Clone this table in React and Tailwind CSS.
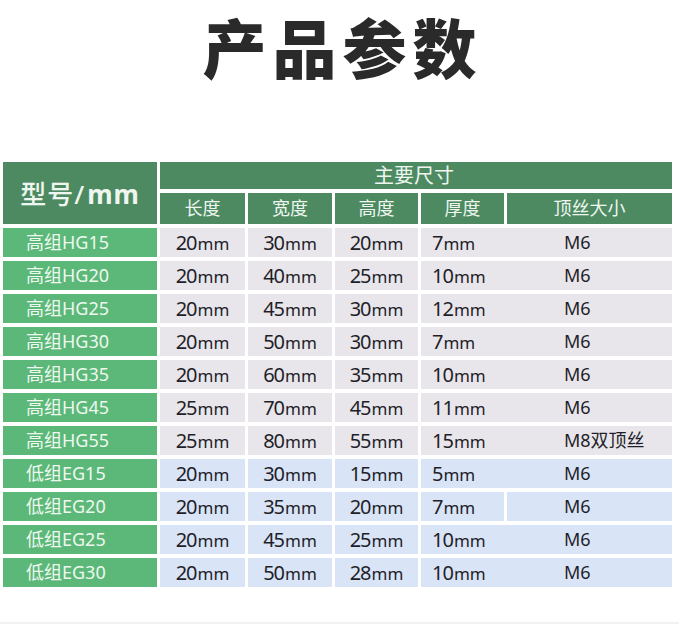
import React from 'react';

const rows = [
  { name: '高组HG15', l: '20', w: '30', h: '20', t: '7', s: 'M6', kind: 'hg' },
  { name: '高组HG20', l: '20', w: '40', h: '25', t: '10', s: 'M6', kind: 'hg' },
  { name: '高组HG25', l: '20', w: '45', h: '30', t: '12', s: 'M6', kind: 'hg' },
  { name: '高组HG30', l: '20', w: '50', h: '30', t: '7', s: 'M6', kind: 'hg' },
  { name: '高组HG35', l: '20', w: '60', h: '35', t: '10', s: 'M6', kind: 'hg' },
  { name: '高组HG45', l: '25', w: '70', h: '45', t: '11', s: 'M6', kind: 'hg' },
  { name: '高组HG55', l: '25', w: '80', h: '55', t: '15', s: 'M8双顶丝', kind: 'hg' },
  { name: '低组EG15', l: '20', w: '30', h: '15', t: '5', s: 'M6', kind: 'eg' },
  { name: '低组EG20', l: '20', w: '35', h: '20', t: '7', s: 'M6', kind: 'eg', split: true },
  { name: '低组EG25', l: '20', w: '45', h: '25', t: '10', s: 'M6', kind: 'eg' },
  { name: '低组EG30', l: '20', w: '50', h: '28', t: '10', s: 'M6', kind: 'eg' },
];

const Mm = ({ v }) => (
  <span>
    <span className="text-[20px] tracking-[-1px]">{v}</span>
    <span className="text-[17px] ml-[1px]">mm</span>
  </span>
);

const App = () => {
  return (
    <div
      className="w-[679px] h-[624px] bg-white overflow-hidden border-b-2 border-[#f1f1f1]"
      style={{ fontFamily: '"Noto Sans", "Noto Sans CJK SC", sans-serif' }}
    >
      <div className="h-[162px] pt-[12px] flex justify-center">
        <h1 className="text-[64px] leading-[74px] font-black tracking-[6px] text-[#2a2a2a] pl-[6px]">产品参数</h1>
      </div>

      <div className="ml-[3px] grid grid-cols-[154px_85px_84px_83px_83px_165px] grid-rows-[27px_31px_repeat(11,29px)] gap-x-[3px] gap-y-[4px]">
        <div className="row-span-2 bg-[#4d8a62] flex items-center justify-center text-[26px] font-medium text-[#eef6ef] tracking-[1px] pt-[2px]">
          型号/<span className="font-bold ml-[2px]">mm</span>
        </div>
        <div className="col-span-5 bg-[#4d8a62] flex items-center justify-center text-[20px] text-[#eef6ef] pr-[4px]">
          主要尺寸
        </div>
        {['长度', '宽度', '高度', '厚度', '顶丝大小'].map((t) => (
          <div key={t} className="bg-[#4d8a62] flex items-center justify-center text-[18px] text-[#eef6ef]">
            {t}
          </div>
        ))}

        {rows.map((r) => {
          const cell = r.kind === 'hg' ? 'bg-[#e8e6eb]' : 'bg-[#d9e4f6]';
          return (
            <React.Fragment key={r.name}>
              <div className="bg-[#5bb878] flex items-center pl-[23px] text-[18px] text-[#eef8f0]">{r.name}</div>
              <div className={`${cell} flex items-center justify-center text-[#1f1f29]`}>
                <Mm v={r.l} />
              </div>
              <div className={`${cell} flex items-center justify-center text-[#1f1f29]`}>
                <Mm v={r.w} />
              </div>
              <div className={`${cell} flex items-center justify-center text-[#1f1f29]`}>
                <Mm v={r.h} />
              </div>
              {r.split ? (
                <>
                  <div className={`${cell} flex items-center pl-[11px] text-[#1f1f29]`}>
                    <Mm v={r.t} />
                  </div>
                  <div className={`${cell} flex items-center pl-[57px] text-[18px] text-[#1f1f29]`}>{r.s}</div>
                </>
              ) : (
                <div className={`${cell} col-span-2 flex items-center text-[#1f1f29]`}>
                  <div className="w-[86px] pl-[11px]">
                    <Mm v={r.t} />
                  </div>
                  <div className="pl-[57px] text-[18px]">{r.s}</div>
                </div>
              )}
            </React.Fragment>
          );
        })}
      </div>
    </div>
  );
};

export default App;
